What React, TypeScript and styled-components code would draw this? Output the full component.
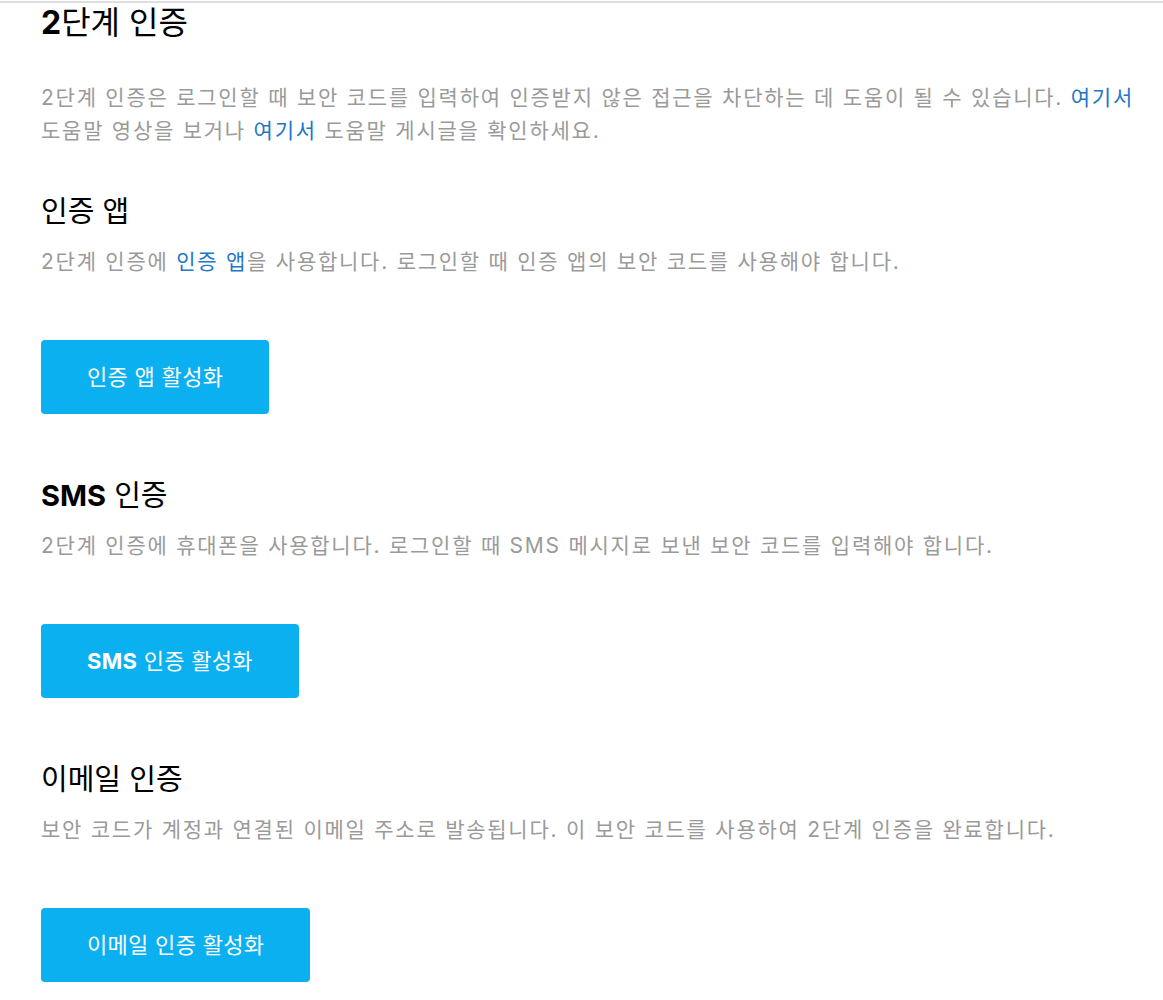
import styled, { createGlobalStyle } from 'styled-components';

const GlobalStyle = createGlobalStyle`
  html, body {
    margin: 0;
    padding: 0;
    background: #ffffff;
  }
  body {
    font-family: 'Inter', 'Noto Sans CJK KR', sans-serif;
  }
`;

const StyledPage = styled.div`
  border-top: 2px solid #dedee2;
  margin-top: 1px;
  padding: 0 20px 40px 41px;
  box-sizing: border-box;
  width: 100%;
`;

const Latin = styled.span`
  font-weight: 700;
`;

const Link = styled.a`
  color: #2276c6;
  text-decoration: none;
`;

const StyledTitle = styled.h1`
  margin: 0;
  height: 40px;
  line-height: 40px;
  font-size: 32px;
  font-weight: 400;
  color: #000;
`;

const StyledIntro = styled.p`
  margin: 38px 0 0;
  font-size: 21px;
  line-height: 33px;
  letter-spacing: 1.75px;
  word-break: keep-all;
  color: #9a9a9a;
`;

const StyledSection = styled.section`
  display: flex;
  flex-direction: column;
  align-items: flex-start;
  margin-top: 45px;

  & + & {
    margin-top: 62px;
  }
`;

const StyledHeading = styled.h2`
  margin: 0;
  height: 40px;
  line-height: 40px;
  font-size: 29px;
  font-weight: 400;
  color: #000;
`;

const StyledDesc = styled(StyledIntro)`
  margin: 13px 0 0;
`;

const StyledButton = styled.button`
  margin-top: 62px;
  height: 74px;
  padding: 0 46px 4px;
  border: none;
  border-radius: 4px;
  background: #0bb0f0;
  color: #fff;
  font-family: inherit;
  font-size: 22px;
  letter-spacing: 0.3px;
  cursor: pointer;
`;

const sections = [
  {
    id: 'app',
    title: <>인증 앱</>,
    desc: (
      <>
        2단계 인증에 <Link href="#">인증 앱</Link>을 사용합니다. 로그인할 때 인증 앱의 보안 코드를 사용해야 합니다.
      </>
    ),
    action: <>인증 앱 활성화</>,
  },
  {
    id: 'sms',
    title: (
      <>
        <Latin>SMS</Latin> 인증
      </>
    ),
    desc: <>2단계 인증에 휴대폰을 사용합니다. 로그인할 때 SMS 메시지로 보낸 보안 코드를 입력해야 합니다.</>,
    action: (
      <>
        <Latin>SMS</Latin> 인증 활성화
      </>
    ),
  },
  {
    id: 'email',
    title: <>이메일 인증</>,
    desc: <>보안 코드가 계정과 연결된 이메일 주소로 발송됩니다. 이 보안 코드를 사용하여 2단계 인증을 완료합니다.</>,
    action: <>이메일 인증 활성화</>,
  },
];

const App = () => {
  return (
    <>
      <GlobalStyle />
      <StyledPage>
        <StyledTitle>
          <Latin>2</Latin>단계 인증
        </StyledTitle>
        <StyledIntro>
          2단계 인증은 로그인할 때 보안 코드를 입력하여 인증받지 않은 접근을 차단하는 데 도움이 될 수 있습니다.{' '}
          <Link href="#">여기서</Link> 도움말 영상을 보거나 <Link href="#">여기서</Link> 도움말 게시글을 확인하세요.
        </StyledIntro>
        {sections.map((s) => (
          <StyledSection key={s.id}>
            <StyledHeading>{s.title}</StyledHeading>
            <StyledDesc>{s.desc}</StyledDesc>
            <StyledButton type="button">{s.action}</StyledButton>
          </StyledSection>
        ))}
      </StyledPage>
    </>
  );
};

export default App;
